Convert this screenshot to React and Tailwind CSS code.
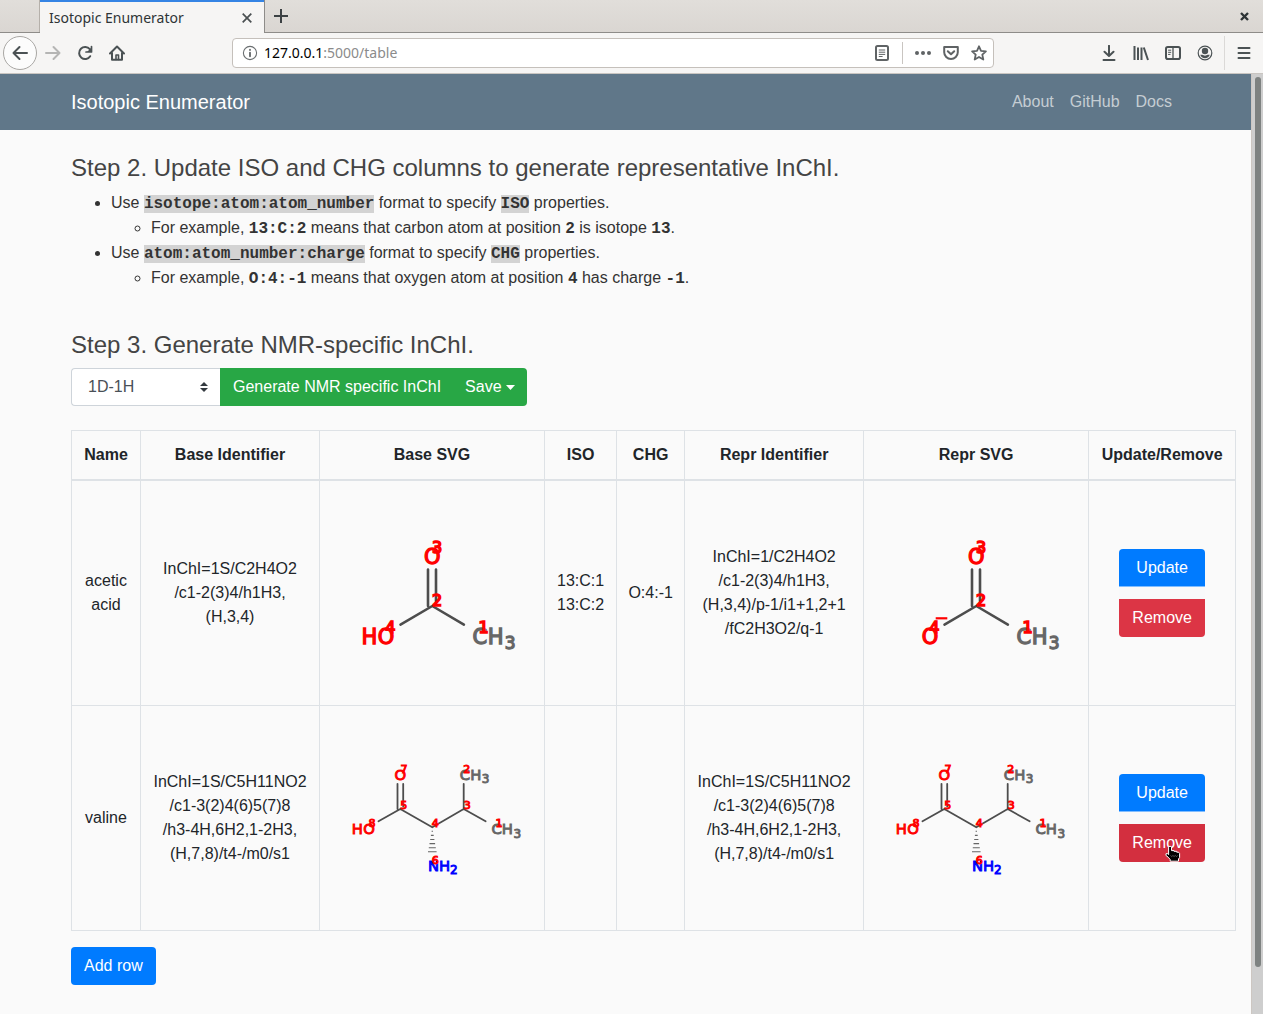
import React from "react";

const UI = "font-['Noto_Sans',sans-serif]";

function TabBar() {
  return (
    <div className={`flex h-[33px] shrink-0 border-b border-[#8e8c89] bg-linear-to-b from-[#e1deda] to-[#dad6d2] text-[#2e3436] ${UI}`}>
      <div className="w-10 border-r border-[#b5b0aa]" />
      <div className="-mb-px flex w-[224px] items-center justify-between border-t-2 border-[#3584e4] bg-[#f6f5f4] pr-3 pl-[9px]">
        <span className="text-sm">Isotopic Enumerator</span>
        <button aria-label="Close tab">
          <svg width="10" height="10" viewBox="0 0 10 10" stroke="#4a4f51" strokeWidth="1.7" fill="none">
            <path d="M.7.7l8.6 8.6M9.3.7L.7 9.3" />
          </svg>
        </button>
      </div>
      <div className="flex flex-1 items-center justify-between border-l border-[#8e8c89] pr-[14px] pl-[9px]">
        <button aria-label="New tab">
          <svg width="14" height="14" viewBox="0 0 14 14" stroke="#3c4143" strokeWidth="2" fill="none">
            <path d="M0 7h14M7 0v14" />
          </svg>
        </button>
        <button aria-label="Close window">
          <svg width="9" height="9" viewBox="0 0 9 9" stroke="#2e3436" strokeWidth="2.4" fill="none">
            <path d="M1 1l7 7M8 1L1 8" />
          </svg>
        </button>
      </div>
    </div>
  );
}

function Icon({ children, color = "#4b5254", label }) {
  return (
    <button aria-label={label} className="shrink-0">
      <svg width="16" height="16" viewBox="0 0 16 16" fill="none" stroke={color} strokeWidth="2" strokeLinecap="round" strokeLinejoin="round">
        {children}
      </svg>
    </button>
  );
}

function Toolbar() {
  return (
    <div className={`flex h-[41px] shrink-0 items-center border-b border-[#c9c5c1] bg-[#f6f5f4] ${UI}`}>
      <button aria-label="Back" className="ml-[3px] flex size-[34px] items-center justify-center rounded-full border border-[#a9a7a4] bg-[#fcfcfc]">
        <svg width="16" height="16" viewBox="0 0 16 16" fill="none" stroke="#4b5254" strokeWidth="2" strokeLinecap="round" strokeLinejoin="round">
          <path d="M15 8H1.5M7.5 2l-6 6 6 6" />
        </svg>
      </button>
      <div className="ml-2 flex gap-4">
        <Icon label="Forward" color="#b5b5b4">
          <path d="M1 8h13.500M8.500 2l6 6-6 6" />
        </Icon>
        <Icon label="Reload">
          <path d="M13.200 11.200A6 6 0 1 1 12.800 4.200" />
          <path d="M14.500 1.500v5.500H9" strokeWidth="1.700" />
          <path d="M14.500 2.500V7H10z" fill="#4b5254" stroke="none" />
        </Icon>
        <Icon label="Home">
          <path d="M1 8.500L8 1.500l7 7M3 8v6.800h10V8" />
          <path d="M7 14.500V10h2.500v4.500" strokeWidth="1.600" />
        </Icon>
      </div>
      <div className="ml-[107px] flex h-[30px] max-w-[762px] flex-1 items-center rounded border border-[#c5c0bb] bg-white pr-[6px] pl-[9px]">
        <Icon label="Site information" color="#6a6e70">
          <circle cx="8" cy="8" r="6.600" strokeWidth="1.100" />
          <path d="M8 7.600v3.600M8 4.800v.2" strokeWidth="1.900" />
        </Icon>
        <div className="relative ml-[6px] flex-1">
          <input aria-label="Address" className="block h-6 w-full bg-transparent text-sm outline-none" />
          <span className="pointer-events-none absolute inset-0 flex items-center text-sm text-[#8b8b8b]">
            <span className="text-black">127.0.0.1</span>:5000/table
          </span>
        </div>
        <Icon label="Reader view" color="#5f6365">
          <rect x="2" y="1" width="12" height="14" rx="1.500" />
          <path d="M5.200 5h5.600M5.200 7.200h5.600M5.200 9.400h5.600M5.200 11.500h3" strokeWidth="1" />
        </Icon>
        <span className="mx-3 h-[22px] w-px bg-[#c9c5c1]" />
        <div className="flex gap-3">
          <Icon label="Page actions">
            <g fill="#5f6365" stroke="none">
              <circle cx="2" cy="8" r="2" />
              <circle cx="8" cy="8" r="2" />
              <circle cx="14" cy="8" r="2" />
            </g>
          </Icon>
          <Icon label="Save to Pocket" color="#5f6365">
            <path d="M1.200 2h13.600v5.200a6.800 6.800 0 0 1-13.600 0z" />
            <path d="M4.800 6.200L8 9.300l3.200-3.100" />
          </Icon>
          <Icon label="Bookmark" color="#5f6365">
            <path d="M8 1.300l2 4.500 4.900.5-3.600 3.300 1 4.900L8 12l-4.300 2.500 1-4.900L1.100 6.300l4.900-.5z" strokeWidth="1.800" />
          </Icon>
        </div>
      </div>
      <div className="ml-auto flex items-center gap-4 pl-4">
        <Icon label="Downloads">
          <path d="M8 .8v10M3.500 6.800L8 11l4.500-4.200M2.500 15h11" />
        </Icon>
        <Icon label="Library">
          <path d="M1.500 1v14M5 2.500V15M8.500 2.500V15M10.800 2.500L15 15" strokeLinecap="butt" />
        </Icon>
        <Icon label="Sidebars">
          <rect x="1" y="2" width="14" height="12" rx="1.800" />
          <path d="M8 2v12" strokeWidth="1.300" />
          <path d="M3.500 5.200h2.300M3.500 7.300h2.300M3.500 9.400h1.600" strokeWidth="1" />
        </Icon>
        <Icon label="Account">
          <circle cx="8" cy="8" r="6.800" strokeWidth="1.200" />
          <g fill="#4b5254" stroke="none">
            <circle cx="8" cy="6" r="3.200" />
            <path d="M3.300 9.800h2L8 10.800l2.700-1h2c-.5 2-2.400 3.400-4.700 3.400s-4.200-1.400-4.700-3.400z" />
          </g>
        </Icon>
      </div>
      <span className="ml-[11px] h-[34px] w-px bg-[#dbd9d7]" />
      <div className="mx-[11px] flex">
        <Icon label="Menu">
          <path d="M2.500 3h11M2.500 8h11M2.500 13h11" />
        </Icon>
      </div>
    </div>
  );
}

function Atom({ x, y, size, fill, sw, children }) {
  return (
    <text x={x} y={y} fontSize={size} fill={fill} stroke={fill} strokeWidth={sw}>
      {children}
    </text>
  );
}

function AceticAcid({ charged, label }) {
  const indices = [
    ["3", 105, 59.8],
    ["2", 105, 113],
    ["1", 151.500, 139.500],
    ["4", 58.300, 139.500],
  ];
  return (
    <svg role="img" aria-label={label} className="block font-['DejaVu_Sans',sans-serif]" width="200" height="200" viewBox="0 0 200 200">
      <g stroke="#4d4d4d" strokeWidth="2.600" strokeLinecap="round">
        <path d="M96 76.500V113M104 76.500V108M100.300 113L68.500 131.700M100.300 113L131.900 131.700" />
      </g>
      <Atom x="92" y="71" size="21" fill="#f00" sw="1.3">O</Atom>
      {charged ? (
        <>
          <Atom x="45.700" y="151.300" size="21" fill="#f00" sw="1.3">O</Atom>
          <path d="M59.700 125.300h11.600" stroke="#f00" strokeWidth="2.200" />
        </>
      ) : (
        <Atom x="29.500 45.700" y="151.300" size="21" fill="#f00" sw="1.3">HO</Atom>
      )}
      <Atom x="140.600 155.800" y="151.300" size="21" fill="#666" sw="1.3">CH</Atom>
      <Atom x="172.800" y="156.200" size="17" fill="#666" sw="1.3">3</Atom>
      <g fill="#f00" stroke="#f00" strokeWidth="1.600" fontSize="16" textAnchor="middle">
        {indices.map(([n, x, y]) => (
          <text key={n} x={x} y={y}>{n}</text>
        ))}
      </g>
    </svg>
  );
}

function Valine({ label }) {
  const indices = [
    ["7", 72, 54.500],
    ["2", 134.700, 54.500],
    ["5", 71.700, 90.700],
    ["3", 135.300, 90.700],
    ["4", 103.300, 108.500],
    ["1", 167, 108.500],
    ["8", 40, 108.500],
    ["6", 103.300, 145.700],
  ];
  return (
    <svg role="img" aria-label={label} className="block font-['DejaVu_Sans',sans-serif]" width="200" height="200" viewBox="0 0 200 200">
      <g stroke="#4d4d4d" strokeWidth="1.800" strokeLinecap="round" fill="none">
        <path d="M65.500 65.800V91M71.200 65.800V88.500M46.500 103.300L68.300 91L100.300 109.300L131.700 91L153.600 103.300M131.700 91V65.800" />
      </g>
      <path
        d="M99.600 113.300h1.400M98.900 117.400h2.800M98.200 121.500h4.200M97.500 125.600h5.600M96.800 129.700h7M96 133.700h8.600"
        stroke="#666"
        strokeWidth="1.100"
      />
      <Atom x="62.500" y="62.400" size="14.800" fill="#f00" sw="0.9">O</Atom>
      <Atom x="19.700 31.200" y="116.200" size="14.800" fill="#f00" sw="0.9">HO</Atom>
      <Atom x="127.800 138.200" y="62.200" size="14.800" fill="#666" sw="0.9">CH</Atom>
      <Atom x="149.800" y="65.300" size="12" fill="#666" sw="0.9">3</Atom>
      <Atom x="159.500 169.800" y="116.200" size="14.800" fill="#666" sw="0.9">CH</Atom>
      <Atom x="181.500" y="119.800" size="12" fill="#666" sw="0.9">3</Atom>
      <Atom x="96 107" y="153.300" size="14.800" fill="#00f" sw="0.9">NH</Atom>
      <Atom x="118" y="156" size="12" fill="#00f" sw="0.9">2</Atom>
      <g fill="#f00" stroke="#f00" strokeWidth="1" fontSize="11" textAnchor="middle">
        {indices.map(([n, x, y]) => (
          <text key={n} x={x} y={y}>{n}</text>
        ))}
      </g>
    </svg>
  );
}

function HandCursor() {
  return (
    <svg className="pointer-events-none absolute top-[21px] left-[46px]" width="16" height="18" viewBox="0 0 16 18" aria-hidden="true">
      <path
        d="M3.600 2.200Q5-.2 6.500 2.200V5.600H9V6.300H11.700V7.200H13.500L14.600 8.500V12.500L13.500 14V16.200H5.200V14.500L3.200 12.200L1 10.500V8.700H2.600L3.600 9.600Z"
        fill="#000"
        stroke="#fff"
        strokeWidth="1"
        strokeLinejoin="round"
      />
      <path d="M5.500 10.500l1.200 1 1.200-1 1.200 1 1.200-1 1.200 1 1.200-1" stroke="#777" strokeWidth=".7" fill="none" />
    </svg>
  );
}

const Code = ({ children }) => (
  <code className="bg-[#d3d3d3] font-['Liberation_Mono',monospace] text-base leading-none font-bold">{children}</code>
);
const Mono = ({ children }) => (
  <b className="font-['Liberation_Mono',monospace] text-base leading-none font-bold">{children}</b>
);

const columns = [
  ["Name", "min-w-[69px] px-3"],
  ["Base Identifier", "min-w-[179px] px-3"],
  ["Base SVG", "min-w-[225px] px-3"],
  ["ISO", "min-w-[72px] px-3"],
  ["CHG", "min-w-[68px] px-2"],
  ["Repr Identifier", "min-w-[179px] px-3"],
  ["Repr SVG", "min-w-[225px] px-3"],
  ["Update/Remove", "min-w-[147px] px-3"],
];

const valineId = ["InChI=1S/C5H11NO2", "/c1-3(2)4(6)5(7)8", "/h3-4H,6H2,1-2H3,", "(H,7,8)/t4-/m0/s1"];

const rows = [
  {
    name: ["acetic", "acid"],
    base: ["InChI=1S/C2H4O2", "/c1-2(3)4/h1H3,", "(H,3,4)"],
    baseSvg: <AceticAcid label="acetic acid" />,
    iso: ["13:C:1", "13:C:2"],
    chg: ["O:4:-1"],
    repr: ["InChI=1/C2H4O2", "/c1-2(3)4/h1H3,", "(H,3,4)/p-1/i1+1,2+1", "/fC2H3O2/q-1"],
    reprSvg: <AceticAcid charged label="acetate" />,
  },
  {
    name: ["valine"],
    base: valineId,
    baseSvg: <Valine label="valine" />,
    iso: [],
    chg: [],
    repr: valineId,
    reprSvg: <Valine label="valine" />,
    hovered: true,
  },
];

const Lines = ({ items }) => items.map((t) => <div key={t}>{t}</div>);

function Row({ row }) {
  const td = "border border-[#dee2e6] p-3";
  return (
    <tr>
      <td className={td}><Lines items={row.name} /></td>
      <td className={td}><Lines items={row.base} /></td>
      <td className={td}>{row.baseSvg}</td>
      <td className={td}><Lines items={row.iso} /></td>
      <td className="border border-[#dee2e6] px-2 py-3"><Lines items={row.chg} /></td>
      <td className={td}><Lines items={row.repr} /></td>
      <td className={td}>{row.reprSvg}</td>
      <td className={td}>
        <div className="inline-flex flex-col bg-[#f8f9fa] text-white">
          <button className="h-[38px] rounded-t border-b border-[#80bdff] bg-[#007bff] px-[13px]">Update</button>
          <button className={`relative mt-3 h-[38px] rounded-b px-[13px] ${row.hovered ? "bg-[#d32f3f]" : "bg-[#dc3545]"}`}>
            Remove
            {row.hovered && <HandCursor />}
          </button>
        </div>
      </td>
    </tr>
  );
}

export default function App() {
  return (
    <div className="flex min-h-screen flex-col bg-[#fafafa] font-['Liberation_Sans',sans-serif] text-base text-[#212529]">
      <TabBar />
      <Toolbar />
      <div className="flex flex-1">
        <div className="min-w-0 flex-1">
          <nav className="bg-[#607789]">
            <div className="mx-auto flex h-14 max-w-[1139px] items-center justify-between px-[15px]">
              <a href="#home" className="text-xl text-white">Isotopic Enumerator</a>
              <div className="flex gap-4 pr-2 text-[#c5cdd3]">
                <a href="#about">About</a>
                <a href="#github">GitHub</a>
                <a href="#docs">Docs</a>
              </div>
            </div>
          </nav>
          <main className="mx-auto max-w-[1139px] px-[15px] pt-6 pb-7">
            <h4 className="text-2xl leading-[28px] text-[#444]">Step 2. Update ISO and CHG columns to generate representative InChI.</h4>
            <ul className="mt-2 list-disc pl-10 leading-[25px] text-[#333]">
              <li>
                Use <Code>isotope:atom:atom_number</Code> format to specify <Code>ISO</Code> properties.
                <ul className="list-[circle] pl-10">
                  <li>For example, <Mono>13:C:2</Mono> means that carbon atom at position <Mono>2</Mono> is isotope <Mono>13</Mono>.</li>
                </ul>
              </li>
              <li>
                Use <Code>atom:atom_number:charge</Code> format to specify <Code>CHG</Code> properties.
                <ul className="list-[circle] pl-10">
                  <li>For example, <Mono>O:4:-1</Mono> means that oxygen atom at position <Mono>4</Mono> has charge <Mono>-1</Mono>.</li>
                </ul>
              </li>
            </ul>
            <h4 className="mt-10 text-2xl leading-[30px] text-[#444]">Step 3. Generate NMR-specific InChI.</h4>
            <div className="mt-2 flex h-[38px]">
              <div className="relative">
                <select aria-label="Experiment" className="h-[38px] w-[149px] appearance-none rounded-l border border-r-0 border-[#ced4da] bg-white pl-4 text-[#495057]">
                  <option>1D-1H</option>
                </select>
                <svg className="pointer-events-none absolute top-[14px] right-3" width="8" height="10" viewBox="0 0 8 10" fill="#343a40" aria-hidden="true">
                  <path d="M4 0L8 4H0zM4 10L0 6h8z" />
                </svg>
              </div>
              <div className="flex rounded-r bg-[#28a745] text-white">
                <button className="pr-3 pl-[13px]">Generate NMR specific InChI</button>
                <button className="flex items-center gap-1 px-3">
                  Save
                  <svg width="9" height="5" viewBox="0 0 9 5" fill="currentColor" aria-hidden="true"><path d="M0 0h9L4.500 5z" /></svg>
                </button>
              </div>
            </div>
            <table className="mt-6 w-max border-collapse text-center">
              <thead>
                <tr>
                  {columns.map(([title, width]) => (
                    <th key={title} className={`border border-b-2 border-[#dee2e6] py-3 whitespace-nowrap ${width}`}>{title}</th>
                  ))}
                </tr>
              </thead>
              <tbody>
                {rows.map((r) => <Row key={r.name[0]} row={r} />)}
              </tbody>
            </table>
            <button className="mt-4 h-[38px] rounded bg-[#007bff] px-[13px] text-white">Add row</button>
          </main>
        </div>
        <div className="flex w-3 flex-col items-center border-l border-[#cdc7c2] bg-[#cecece] pt-[3px] pb-[47px]">
          <div className="w-[6px] flex-1 rounded-full bg-[#7e8281]" />
        </div>
      </div>
    </div>
  );
}
